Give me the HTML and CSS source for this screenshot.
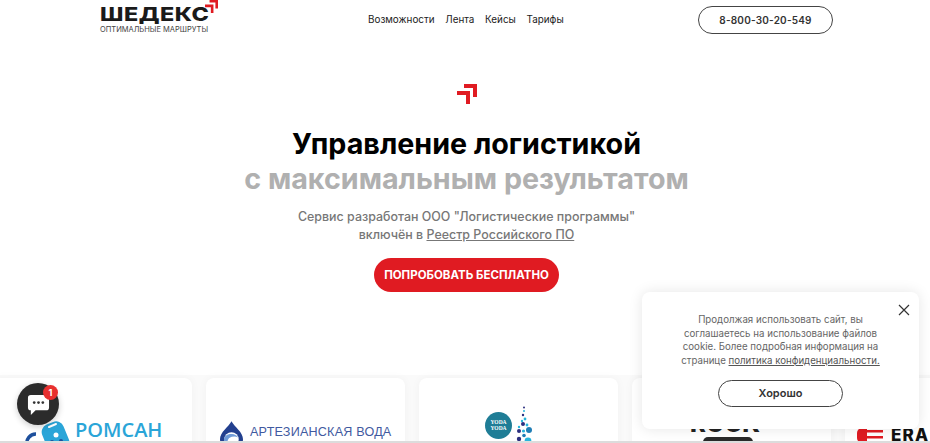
FILE: index.html
```html
<!DOCTYPE html>
<html lang="ru">
<head>
    <meta charset="UTF-8">
    <title>Шедекс</title>
    <link rel="stylesheet" href="styles.css">
</head>
<body>
    <div class="page">
        <header class="header">
            <a class="logo">
                <span class="logo-name">ШЕДЕКС</span>
                <svg class="logo-mark" viewBox="0 0 20 20"><use href="#arrows"/></svg>
                <span class="logo-sub">ОПТИМАЛЬНЫЕ МАРШРУТЫ</span>
            </a>
            <nav class="nav">
                <a>Возможности</a>
                <a>Лента</a>
                <a>Кейсы</a>
                <a>Тарифы</a>
            </nav>
            <a class="phone">8-800-30-20-549</a>
        </header>

        <main class="hero">
            <svg class="hero-mark" viewBox="0 0 20 20">
                <defs>
                    <g id="arrows" fill="#e01b22">
                        <path d="M7 0H20V13H16V4H7Z"/>
                        <path d="M0 7H13V20H9V11H0Z"/>
                    </g>
                </defs>
                <use href="#arrows"/>
            </svg>
            <h1 class="title">Управление логистикой<span class="title-grey">с максимальным результатом</span></h1>
            <p class="lead">Сервис разработан ООО "Логистические программы"<br>включён в <a>Реестр Российского ПО</a></p>
            <a class="cta">ПОПРОБОВАТЬ БЕСПЛАТНО</a>
        </main>

        <section class="clients">
            <div class="client">
                <div class="romsan">
                    <svg class="romsan-icon" viewBox="0 0 45 24">
                        <path d="M2 24a9 9 0 0 1 9-11" fill="none" stroke="#1d4f9c" stroke-width="3.5"/>
                        <rect x="19" y="1" width="23" height="30" rx="8" fill="#2aa5d8" transform="rotate(-22 31 16)"/>
                        <path d="M24 6l7-3" stroke="#fff" stroke-width="2" stroke-linecap="round"/>
                        <circle cx="31" cy="14" r="2.5" fill="#fff"/>
                        <circle cx="36" cy="20" r="2" fill="#1d4f9c"/>
                        <circle cx="27" cy="21" r="2" fill="#1d4f9c"/>
                    </svg>
                    <div>
                        <div class="romsan-name">РОМСАН</div>
                        <div class="romsan-sub">бытовая химия оптом</div>
                    </div>
                </div>
            </div>
            <div class="client">
                <div class="water">
                    <svg class="water-icon" viewBox="0 0 24 30">
                        <path d="M12 0C15 6 24 11 24 19A12 12 0 0 1 0 19C0 11 9 6 12 0Z" fill="#23408f"/>
                        <circle cx="12" cy="19" r="7.5" fill="#fff"/>
                        <path d="M4 20a8 7 0 0 1 15-3a7 5 0 0 0-11 3a5 5 0 0 0 8 4a9 7 0 0 1-12-4Z" fill="#6f9bd8"/>
                    </svg>
                    <div>
                        <div class="water-name">АРТЕЗИАНСКАЯ ВОДА</div>
                        <div class="water-sub">ПРОИЗВОДСТВЕННАЯ КОМПАНИЯ</div>
                    </div>
                </div>
            </div>
            <div class="client">
                <div class="yoda">
                    <div class="yoda-badge">YODA<br>YODA</div>
                    <svg class="yoda-bottle" viewBox="0 0 18 38">
                        <circle cx="9" cy="1.5" r="1" fill="#2b2f7f"/>
                        <circle cx="9" cy="5" r="1" fill="#27b5dc"/>
                        <circle cx="8" cy="9" r="1.2" fill="#2b2f7f"/>
                        <circle cx="10" cy="13" r="1.4" fill="#27b5dc"/>
                        <circle cx="7" cy="15" r="1.2" fill="#27b5dc"/>
                        <circle cx="8" cy="18" r="2" fill="#2b2f7f"/>
                        <circle cx="12" cy="19" r="1.4" fill="#27b5dc"/>
                        <circle cx="4" cy="21" r="1.2" fill="#27b5dc"/>
                        <circle cx="4" cy="25" r="2" fill="#2b2f7f"/>
                        <circle cx="14" cy="24" r="3" fill="#1f7db5"/>
                        <circle cx="8.5" cy="25" r="1.6" fill="#27b5dc"/>
                        <circle cx="9" cy="29.5" r="1.8" fill="#1f7db5"/>
                        <circle cx="4" cy="33" r="2.2" fill="#2b2f7f"/>
                        <circle cx="13" cy="35" r="3.4" fill="#27b5dc"/>
                    </svg>
                </div>
            </div>
            <div class="client">
                <div class="rock">
                    <span class="rock-name">ROCK</span>
                    <div class="rock-bar"></div>
                </div>
            </div>
            <div class="client client-last">
                <div class="era">
                    <svg class="era-icon" viewBox="0 0 26 15">
                        <path d="M0 5a5 5 0 0 1 5-5h5v15H5a5 5 0 0 1-5-5Z" fill="#e01b22"/>
                        <path d="M10 2H26V4.5H10ZM10 8H26V10.5H10Z" fill="#e01b22"/>
                    </svg>
                    <span class="era-name">ERA</span>
                </div>
            </div>
        </section>

        <div class="chat">
            <svg class="chat-icon" viewBox="0 0 24 24">
                <path d="M4 2H20a3 3 0 0 1 3 3V15a3 3 0 0 1-3 3H9L4 23V18a3 3 0 0 1-3-3V5a3 3 0 0 1 3-3Z" fill="#fff"/>
                <circle cx="7.5" cy="10" r="1.4" fill="#333"/>
                <circle cx="12" cy="10" r="1.4" fill="#333"/>
                <circle cx="16.5" cy="10" r="1.4" fill="#333"/>
            </svg>
            <span class="chat-badge">1</span>
        </div>

        <aside class="cookie">
            <svg class="cookie-close" viewBox="0 0 12 12"><path d="M1 1L11 11M11 1L1 11"/></svg>
            <p class="cookie-text">Продолжая использовать сайт, вы<br>соглашаетесь на использование файлов<br>cookie. Более подробная информация на<br>странице <a>политика конфиденциальности.</a></p>
            <a class="cookie-ok">Хорошо</a>
        </aside>

        <div class="bottom-line"></div>
    </div>
</body>
</html>
```

FILE: styles.css
```css
* {
    box-sizing: border-box;
}
html, body {
    margin: 0;
    padding: 0;
    height: 100%;
    overflow: hidden;
}
body {
    font-family: Inter, "Liberation Sans", sans-serif;
    background: #fff;
    color: #222;
}
.page {
    position: relative;
    height: 443px;
    overflow: hidden;
}

/* header */
.header {
    display: flex;
    align-items: flex-start;
    padding: 0 97px 0 100px;
    height: 45px;
}
.logo {
    position: relative;
    display: flex;
    flex-direction: column;
    width: 120px;
    margin-top: 5px;
}
.logo-name {
    font-size: 19px;
    line-height: 19px;
    font-weight: 800;
    letter-spacing: 0.4px;
    color: #1a1a1a;
    transform: scaleX(1.23);
    transform-origin: left center;
}
.logo-mark {
    position: absolute;
    top: -5px;
    left: 105px;
    width: 13px;
    height: 13px;
}
.logo-sub {
    font-size: 7.5px;
    line-height: 11px;
    margin-top: 0;
    white-space: nowrap;
    color: #444;
}
.nav {
    display: flex;
    gap: 10.7px;
    margin: 12px 0 0 148px;
    font-size: 9.9px;
    line-height: 15px;
    color: #222;
}
.phone {
    margin-left: auto;
    margin-top: 6px;
    width: 135px;
    height: 28px;
    border: 1px solid #444;
    border-radius: 14px;
    font-size: 10px;
    font-weight: 600;
    letter-spacing: 0.2px;
    line-height: 26px;
    text-align: center;
    color: #333;
}

/* hero */
.hero {
    display: flex;
    flex-direction: column;
    align-items: center;
    padding: 39px 0 0 3px;
}
.hero-mark {
    width: 20px;
    height: 20px;
}
.title {
    margin: 22px 0 0;
    font-size: 28.7px;
    line-height: 35px;
    font-weight: 700;
    text-align: center;
    color: #000;
}
.title-grey {
    display: block;
    color: #b0b0b0;
}
.lead {
    margin: 12px 0 0;
    font-size: 12.45px;
    line-height: 18px;
    font-weight: 500;
    text-align: center;
    color: #777;
}
.lead a {
    text-decoration: underline;
}
.cta {
    margin-top: 14px;
    width: 185px;
    height: 34px;
    border-radius: 17px;
    background: #e01b22;
    color: #fff;
    font-size: 11.5px;
    font-weight: 700;
    line-height: 34px;
    text-align: center;
    white-space: nowrap;
}

/* client cards, cut off by the window */
.clients {
    display: flex;
    gap: 14px;
    margin-top: 83px;
    padding: 3px 0 0;
    height: 68px;
    background: #fafafa;
}
.client {
    flex: none;
    width: 199px;
    height: 120px;
    background: #fff;
    border-radius: 8px;
    box-shadow: 0 0 10px rgba(0, 0, 0, 0.04);
}
.client:first-child {
    margin-left: -7px;
}
.romsan {
    display: flex;
    gap: 5px;
    margin: 42px 0 0 32px;
}
.romsan-icon {
    width: 45px;
    height: 24px;
    flex: none;
    margin-top: 1px;
}
.romsan-name {
    font-family: "Open Sans", sans-serif;
    font-size: 20px;
    line-height: 20px;
    font-weight: 600;
    color: #2aa5d8;
}
.romsan-sub {
    font-size: 6px;
    line-height: 8px;
    margin-top: 1px;
    letter-spacing: 1.2px;
    white-space: nowrap;
    color: #667;
}
.water {
    display: flex;
    gap: 7px;
    margin: 43px 0 0 14px;
}
.water-icon {
    width: 23px;
    height: 29px;
    flex: none;
}
.water-name {
    font-family: "Liberation Sans", sans-serif;
    font-size: 12.6px;
    line-height: 14px;
    margin-top: 4px;
    letter-spacing: 0.2px;
    color: #3f5aa0;
    white-space: nowrap;
}
.water-sub {
    font-family: "Liberation Sans", sans-serif;
    font-size: 7.8px;
    line-height: 9px;
    letter-spacing: 0.4px;
    color: #555;
    white-space: nowrap;
}
.yoda {
    display: flex;
    gap: 3px;
    margin: 34px 0 0 66px;
}
.yoda-badge {
    flex: none;
    width: 27px;
    height: 27px;
    border-radius: 50%;
    background: #1f7d96;
    color: #fff;
    font-family: "Liberation Serif", serif;
    font-size: 5.5px;
    font-weight: 700;
    line-height: 6px;
    padding-top: 7px;
    text-align: center;
}
.yoda-bottle {
    flex: none;
    width: 18px;
    height: 38px;
    margin-top: -6px;
}
.rock {
    margin: 34px 0 0 58px;
}
.rock-name {
    display: block;
    font-size: 24px;
    font-weight: 800;
    line-height: 24px;
    color: #222;
}
.rock-bar {
    width: 50px;
    height: 20px;
    margin: 1px 0 0 13px;
    border-radius: 5px;
    background: #2a2a2a;
}
.client-last {
    padding: 50px 0 0 12px;
}
.era {
    display: flex;
    align-items: flex-start;
    gap: 8px;
}
.era-icon {
    flex: none;
    width: 26px;
    height: 15px;
}
.era-name {
    font-size: 17px;
    font-weight: 800;
    line-height: 14px;
    letter-spacing: 1.2px;
    color: #111;
}

/* chat button */
.chat {
    position: absolute;
    left: 17px;
    top: 383px;
    display: flex;
    align-items: center;
    justify-content: center;
    width: 42px;
    height: 42px;
    border-radius: 50%;
    background: #2b2b2b;
    box-shadow: 0 2px 6px rgba(0, 0, 0, 0.2);
}
.chat-icon {
    width: 23px;
    height: 23px;
}
.chat-badge {
    position: absolute;
    top: 2px;
    right: 1px;
    width: 15px;
    height: 15px;
    border-radius: 50%;
    background: #e8302f;
    color: #fff;
    font-size: 9px;
    font-weight: 700;
    line-height: 15px;
    text-align: center;
}

/* cookie popup */
.cookie {
    position: absolute;
    left: 642px;
    top: 292px;
    display: flex;
    flex-direction: column;
    align-items: center;
    width: 277px;
    height: 137px;
    padding: 21px 0 0;
    background: #fff;
    border-radius: 8px;
    box-shadow: 0 0 14px rgba(0, 0, 0, 0.1);
}
.cookie-close {
    position: absolute;
    top: 12px;
    right: 9px;
    width: 12px;
    height: 12px;
    fill: none;
    stroke: #333;
    stroke-width: 1.2;
}
.cookie-text {
    margin: 0;
    font-size: 9.7px;
    line-height: 13.5px;
    text-align: center;
    white-space: nowrap;
    color: #666;
}
.cookie-text a {
    color: #555;
    text-decoration: underline;
}
.cookie-ok {
    margin-top: 13px;
    width: 125px;
    height: 27px;
    border: 1px solid #444;
    border-radius: 14px;
    font-size: 11px;
    font-weight: 600;
    line-height: 25px;
    text-align: center;
    color: #333;
}

/* thin grey edge at the bottom of the window */
.bottom-line {
    position: absolute;
    left: 0;
    right: 0;
    bottom: 0;
    height: 2px;
    background: #dcdcdc;
}
```
